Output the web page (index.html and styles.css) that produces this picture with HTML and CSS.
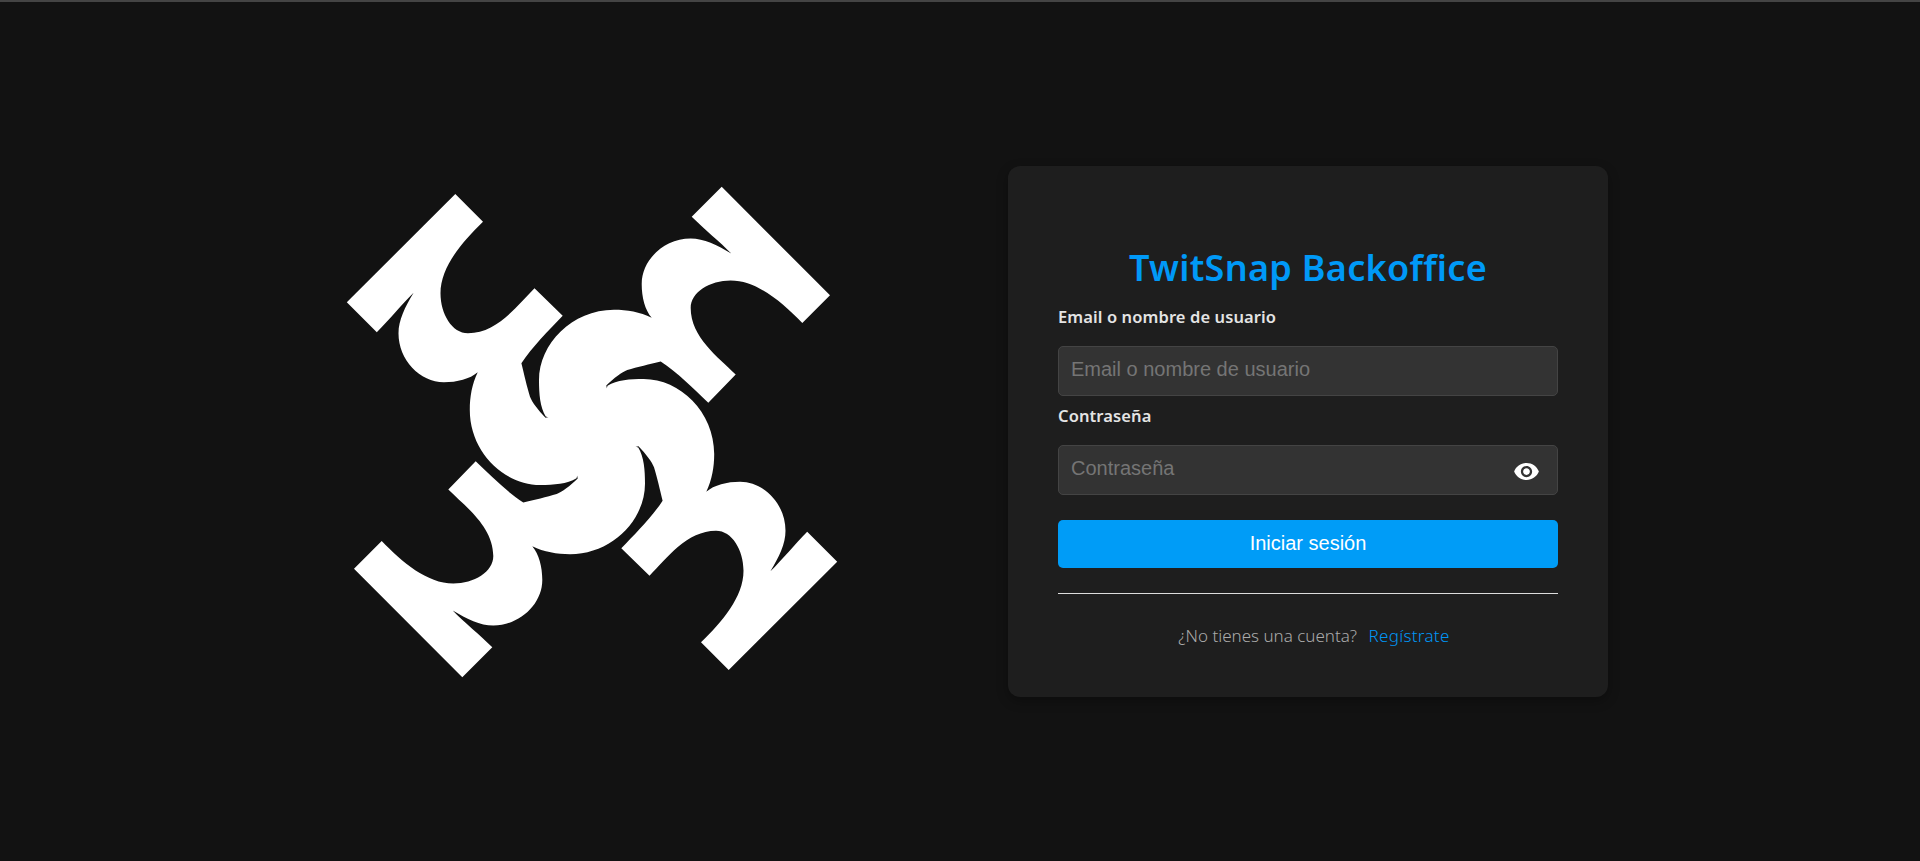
FILE: index.html
```html
<!DOCTYPE html>
<html lang="es">

<head>
    <meta charset="UTF-8">
    <meta name="viewport" content="width=device-width, initial-scale=1.0">
    <title>TwitSnap Backoffice</title>
    <link rel="stylesheet" href="styles.css">
</head>

<body>
    <div class="login-page">
        <!-- Logo: one arm, repeated four times around the centre -->
        <svg class="logo" viewBox="-250 -250 500 500" aria-label="TwitSnap">
            <defs>
                <path id="logo-arm" d="M-136.7 -238 L-245.2 -129.7 L-215.2 -99.7 C-203 -112 -190 -128 -178.4 -139.3 C-187 -125 -193.5 -112 -193.5 -98.7 C-193.5 -72 -172 -49.7 -148.1 -49.7 C-135 -49.7 -122 -53 -114.3 -59.7 C-120 -48 -122.2 -35 -122.2 -22 C-122.2 20 -88 53 -51.7 53 C-38 53 -25 52 -15.5 46.3 L-14 41 L0 0 L-43 -15 L-46.5 -14.3 C-54 -22 -60 -30 -62 -35.3 C-65 -45 -68 -58 -70.6 -68.7 C-60 -85 -43 -102 -29.3 -116.3 L-57.5 -143.7 C-75 -126 -95 -98.7 -124 -98.7 C-140 -98.7 -151.5 -118 -151.5 -138.7 C-151.5 -165 -130 -190 -109 -210.3 Z" />
            </defs>
            <circle r="46" />
            <use href="#logo-arm" />
            <use href="#logo-arm" transform="rotate(90)" />
            <use href="#logo-arm" transform="rotate(180)" />
            <use href="#logo-arm" transform="rotate(270)" />
        </svg>

        <!-- Login card -->
        <form class="card">
            <h1>TwitSnap Backoffice</h1>

            <label for="user">Email o nombre de usuario</label>
            <input type="text" id="user" placeholder="Email o nombre de usuario">

            <label for="password">Contraseña</label>
            <div class="password-field">
                <input type="password" id="password" placeholder="Contraseña">
                <button type="button" class="toggle" aria-label="Mostrar contraseña">
                    <svg viewBox="0 0 24 24" width="27" height="27">
                        <path d="M12 4.5C7 4.5 2.73 7.61 1 12c1.73 4.39 6 7.5 11 7.5s9.27-3.11 11-7.5c-1.73-4.39-6-7.5-11-7.5zM12 17c-2.76 0-5-2.24-5-5s2.24-5 5-5 5 2.24 5 5-2.24 5-5 5zm0-8c-1.66 0-3 1.34-3 3s1.34 3 3 3 3-1.34 3-3-1.34-3-3-3z" />
                    </svg>
                </button>
            </div>

            <button type="submit" class="submit">Iniciar sesión</button>
            <hr>

            <p class="register">¿No tienes una cuenta? <a href="#">Regístrate</a></p>
        </form>
    </div>
</body>

</html>
```

FILE: styles.css
```css
* {
    box-sizing: border-box;
}

body {
    margin: 0;
    height: 861px;
    overflow: hidden;
    background: #121212;
    border-top: 2px solid #444;
    font-family: "Noto Sans", Arial, sans-serif;
    color: #eee;
}

.login-page {
    height: 100%;
    display: flex;
    align-items: center;
    padding-left: 342px;
    gap: 166px;
}

.logo {
    width: 500px;
    height: 500px;
    flex: none;
    fill: #fff;
}

.card {
    width: 600px;
    padding: 50px 50px 49px;
    background: #1e1e1e;
    border-radius: 12px;
    box-shadow: 0 4px 12px rgba(0, 0, 0, 0.3);
}

h1 {
    margin: 30px 0 15px;
    font-size: 36px;
    font-weight: 600;
    letter-spacing: 0.3px;
    line-height: 44px;
    text-align: center;
    color: #0099f7;
}

label {
    display: block;
    margin-bottom: 17px;
    font-size: 16.5px;
    font-weight: 600;
    letter-spacing: 0.1px;
    line-height: 24px;
    color: #e4e4e4;
}

input {
    display: block;
    width: 100%;
    height: 50px;
    margin-bottom: 8px;
    padding: 0 12px 4px;
    background: #333;
    border: 1px solid #444;
    border-radius: 5px;
    font-family: "Liberation Sans", Arial, sans-serif;
    font-size: 20px;
    color: #eee;
}

input::placeholder {
    color: #757575;
}

.password-field {
    position: relative;
    margin-bottom: 25px;
}

.password-field input {
    margin-bottom: 0;
}

.toggle {
    position: absolute;
    top: 13px;
    right: 18px;
    padding: 0;
    border: 0;
    background: none;
    line-height: 0;
    cursor: pointer;
}

.toggle svg {
    fill: #fff;
}

.submit {
    display: block;
    width: 100%;
    height: 48px;
    padding: 0 0 2px;
    border: 0;
    border-radius: 5px;
    background: #009cf7;
    font-family: "Liberation Sans", Arial, sans-serif;
    font-size: 20px;
    color: #fff;
    cursor: pointer;
}

hr {
    margin: 25px 0 30px;
    border: 0;
    border-top: 1px solid #ddd;
}

.register {
    margin: 0;
    padding-left: 12px;
    font-size: 17px;
    font-weight: 300;
    line-height: 24px;
    text-align: center;
    color: #aaa;
}

.register a {
    margin-left: 7px;
    letter-spacing: 0.3px;
    color: #0096f5;
    text-decoration: none;
}
```
